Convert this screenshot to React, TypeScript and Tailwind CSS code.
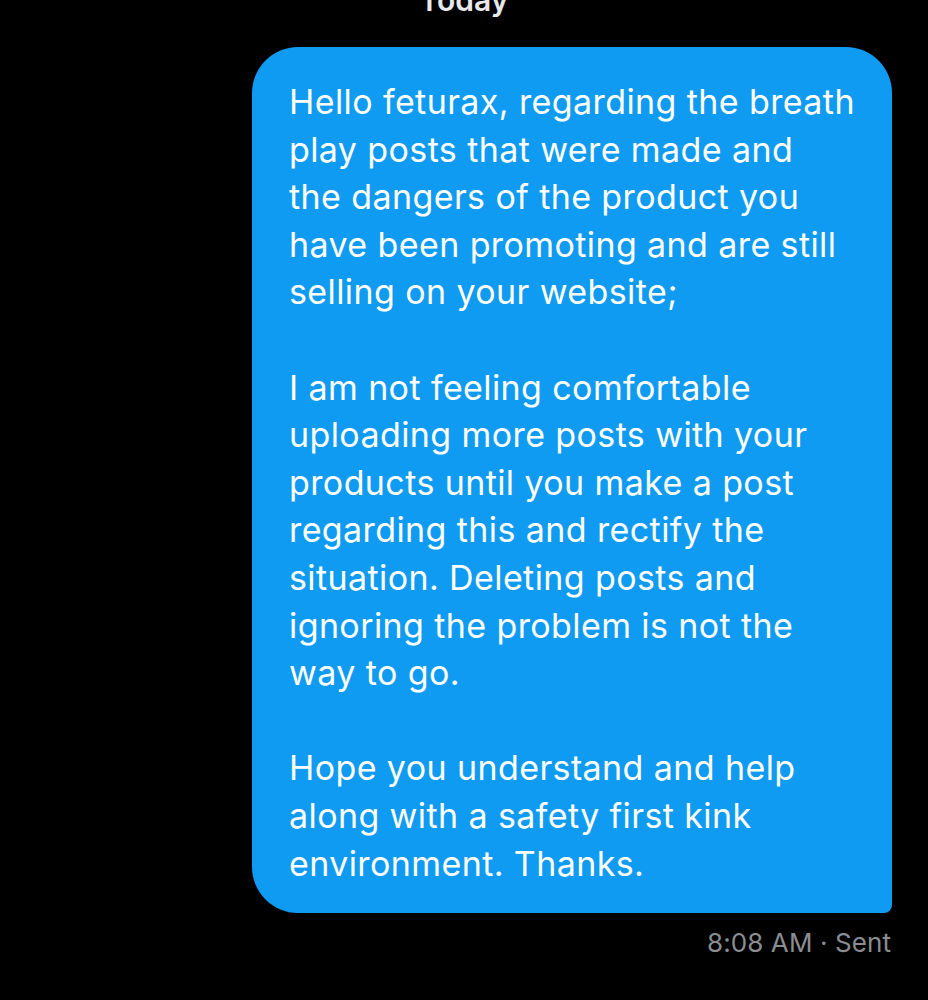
const paragraphs = [
  [
    "Hello feturax, regarding the breath",
    "play posts that were made and",
    "the dangers of the product you",
    "have been promoting and are still",
    "selling on your website;",
  ],
  [
    "I am not feeling comfortable",
    "uploading more posts with your",
    "products until you make a post",
    "regarding this and rectify the",
    "situation. Deleting posts and",
    "ignoring the problem is not the",
    "way to go.",
  ],
  [
    "Hope you understand and help",
    "along with a safety first kink",
    "environment. Thanks.",
  ],
];

export default function App() {
  return (
    <main
      className="bg-black min-h-screen w-[928px] h-[1000px] overflow-hidden relative"
      style={{ fontFamily: "Inter, 'Noto Sans', sans-serif" }}
    >
      {/* date header, cut off by the top edge */}
      <div className="h-[47px] overflow-hidden relative">
        <div className="absolute left-0 right-0 -top-[22px] text-center text-[30px] font-semibold text-[#e7e9ea]">
          Today
        </div>
      </div>

      <div className="flex justify-end pr-[36px]">
        <div className="w-[640px] bg-[#0f9bf1] rounded-[46px] rounded-br-[8px] pl-[37px] pt-[31px] pb-[26px] text-white text-[34px] leading-[47.6px] tracking-[0.4px]">
          {paragraphs.map((lines, i) => (
            <div key={i} className={i > 0 ? "mt-[47.6px]" : ""}>
              {lines.map((line) => (
                <div key={line} className="whitespace-nowrap">
                  {line}
                </div>
              ))}
            </div>
          ))}
        </div>
      </div>

      <div className="flex justify-end pr-[37px] pt-[14px] text-[26px] text-[#8a8d91] leading-[32px] tracking-[0.1px]">
        8:08 AM · Sent
      </div>
    </main>
  );
}
